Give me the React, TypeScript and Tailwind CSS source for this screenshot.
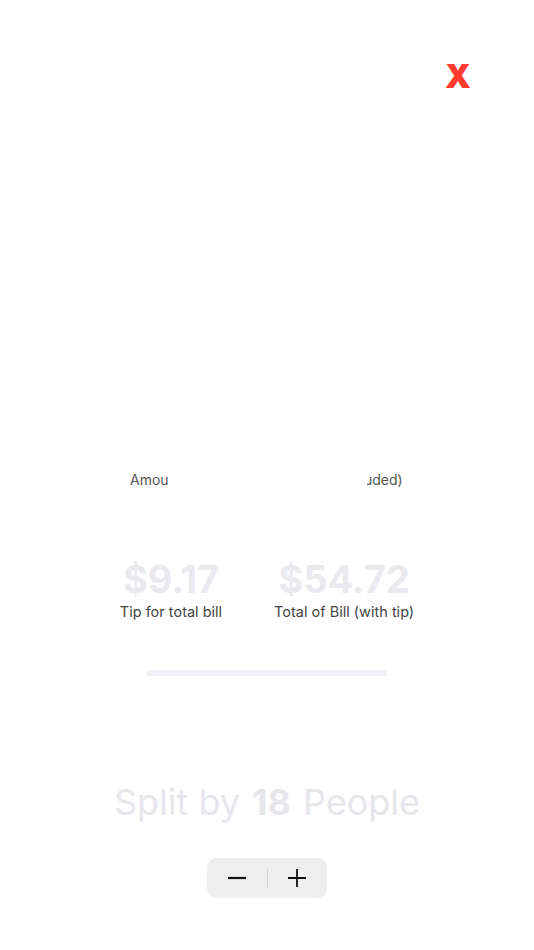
export default function App() {
  return (
    <div className="relative flex min-h-[950px] w-full flex-col bg-white font-['Inter',sans-serif]">
      {/* close */}
      <div className="flex justify-end pr-[63px] pt-[60px]">
        <span className="text-[33px] font-black leading-none text-[#ff3b30]">X</span>
      </div>

      {/* amount label, middle covered */}
      <div className="mt-[377px] flex h-[20px] justify-between pl-[130px] pr-[131px] text-[14px] leading-[20px] text-[#555]">
        <span>Amou</span>
        <span className="block w-[36px] overflow-hidden whitespace-nowrap">
          <span className="-ml-[3px] inline-block">uded)</span>
        </span>
      </div>

      {/* totals */}
      <div className="mt-[69px] flex justify-center gap-[52px]">
        <div className="flex flex-col items-center">
          <span className="text-[38px] font-bold leading-[40px] text-[#e9e9ee]">$9.17</span>
          <span className="mt-[3px] text-[14.5px] leading-[20px] text-[#444]">Tip for total bill</span>
        </div>
        <div className="flex flex-col items-center">
          <span className="text-[38px] font-bold leading-[40px] text-[#e9e9ee]">$54.72</span>
          <span className="mt-[3px] text-[14.5px] leading-[20px] text-[#444]">Total of Bill (with tip)</span>
        </div>
      </div>

      {/* progress track */}
      <div className="mt-[48px] flex justify-center">
        <div className="h-[6px] w-[240px] bg-[#f1f0f6]" />
      </div>

      {/* people */}
      <div className="mt-[103px] flex justify-center text-[36px] leading-[46px] text-[#e6e6eb]">
        <span>Split by</span>
        <span className="mx-[12px] font-bold">18</span>
        <span>People</span>
      </div>

      {/* stepper */}
      <div className="mt-[33px] flex justify-center">
        <div className="flex h-[40px] w-[120px] items-center rounded-[9px] bg-[#eeeeef]">
          <button className="flex h-full flex-1 items-center justify-center">
            <svg width="18" height="18" viewBox="0 0 18 18">
              <path d="M0 9h18" stroke="#111" strokeWidth="2.2" />
            </svg>
          </button>
          <div className="h-[20px] w-px bg-[#d4d4d8]" />
          <button className="flex h-full flex-1 items-center justify-center">
            <svg width="18" height="18" viewBox="0 0 18 18">
              <path d="M0 9h18M9 0v18" stroke="#111" strokeWidth="1.8" />
            </svg>
          </button>
        </div>
      </div>
    </div>
  );
}
